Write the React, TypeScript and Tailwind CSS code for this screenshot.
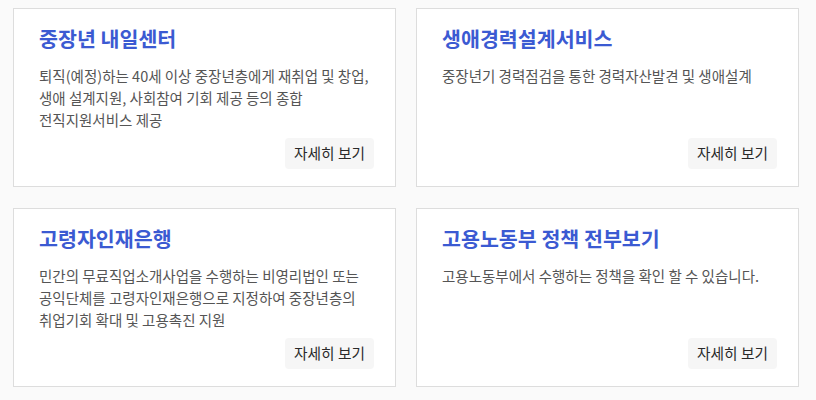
const CARDS = [
  {
    title: '중장년 내일센터',
    desc: '퇴직(예정)하는 40세 이상 중장년층에게 재취업 및 창업,\n생애 설계지원, 사회참여 기회 제공 등의 종합\n전직지원서비스 제공',
  },
  {
    title: '생애경력설계서비스',
    desc: '중장년기 경력점검을 통한 경력자산발견 및 생애설계',
  },
  {
    title: '고령자인재은행',
    desc: '민간의 무료직업소개사업을 수행하는 비영리법인 또는\n공익단체를 고령자인재은행으로 지정하여 중장년층의\n취업기회 확대 및 고용촉진 지원',
  },
  {
    title: '고용노동부 정책 전부보기',
    desc: '고용노동부에서 수행하는 정책을 확인 할 수 있습니다.',
  },
];

export default function App() {
  return (
    <div
      className="min-h-[400px] bg-[#fafafa] pl-[13px] pr-[17px] pt-2"
      style={{ fontFamily: '"Noto Sans CJK KR", "Noto Sans", sans-serif' }}
    >
      <div className="grid grid-cols-2 gap-x-5 gap-y-[21px]">
        {CARDS.map(card => (
          <div
            key={card.title}
            className="h-[179px] bg-white border border-[#dddddd] pl-[25px] pr-[21px] pt-[15px] pb-[17px] flex flex-col"
          >
            <h2 className="text-[20.6px] leading-[28px] font-semibold text-[#3b5ad2]">
              {card.title}
            </h2>
            <p className="mt-[13px] text-[14.5px] leading-[22px] text-[#555555] whitespace-pre-line">
              {card.desc}
            </p>
            <button className="mt-auto self-end h-[31px] w-[89px] rounded bg-[#f6f6f6] text-[14.7px] text-[#2a2a2a]">
              자세히 보기
            </button>
          </div>
        ))}
      </div>
    </div>
  );
}
